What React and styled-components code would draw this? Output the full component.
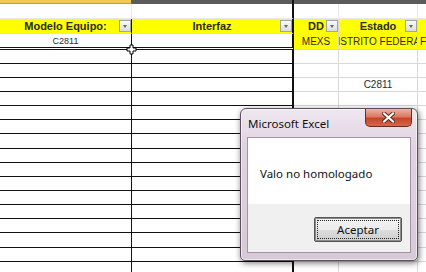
import styled, { createGlobalStyle } from "styled-components";

const GlobalStyle = createGlobalStyle`
  html, body { margin: 0; padding: 0; background: #fff; }
  body { font-family: "Liberation Sans", Arial, sans-serif; overflow: hidden; }
`;

const YELLOW = "#ffff00";
const INK = "1px solid #111";
const GRID = "1px solid #d8d8d8";
const FAINT = "1px solid #e8e8e8";

// column widths include the right edge line
const COLS = [132, 162, 45, 79, 60];
const EDGES = [INK, "2px solid #111", GRID, GRID, "none"];

const Sheet = styled.div`
  position: relative;
  width: 426px;
  height: 272px;
  overflow: hidden;
  background: #fff;
`;

const Row = styled.div`
  display: flex;
  height: ${(p) => p.$h}px;
`;

const Cell = styled.div`
  position: relative;
  box-sizing: border-box;
  flex: none;
  width: ${(p) => p.$w}px;
  height: 100%;
  display: flex;
  align-items: center;
  justify-content: ${(p) => p.$align || "center"};
  padding-left: ${(p) => (p.$align ? "2px" : "0")};
  overflow: hidden;
  white-space: nowrap;
  background: ${(p) => p.$bg || "#fff"};
  border-right: ${(p) => p.$edge};
  border-bottom: ${(p) => p.$under || "none"};
  color: #2a2a2a;
  font-size: ${(p) => p.$size || 10}px;
  font-weight: ${(p) => (p.$bold ? 700 : 400)};
`;

const Label = styled.span`
  flex: none;
`;

const DropBtn = styled.span`
  position: absolute;
  right: 0;
  top: 1px;
  width: 12px;
  height: 12px;
  box-sizing: border-box;
  border: 1px solid #a4a4a4;
  background: linear-gradient(180deg, #fafafa, #dcdcdc);
  display: flex;
  align-items: center;
  justify-content: center;
  &::after {
    content: "";
    border-left: 2.5px solid transparent;
    border-right: 2.5px solid transparent;
    border-top: 3px solid #666;
  }
`;

const Cursor = styled.svg`
  position: absolute;
  left: 126px;
  top: 44px;
`;

const Dialog = styled.div`
  position: absolute;
  left: 240px;
  top: 108px;
  width: 178px;
  height: 153px;
  box-sizing: border-box;
  border: 1px solid #5e4e60;
  border-radius: 6px 6px 5px 5px;
  background: linear-gradient(180deg, #efe7f0 0%, #e0d3e1 25%, #d8c9d9 100%);
  box-shadow: 1px 2px 6px rgba(0, 0, 0, 0.55), inset 0 0 0 1px rgba(255, 255, 255, 0.55);
  display: flex;
  flex-direction: column;
  font-family: "Noto Sans", "Open Sans", sans-serif;
`;

const TitleBar = styled.div`
  position: relative;
  height: 28px;
  display: flex;
  align-items: center;
  padding-left: 7px;
  font-size: 11.5px;
  color: #111;
`;

const CloseBtn = styled.div`
  position: absolute;
  top: 0;
  right: 5px;
  width: 47px;
  height: 18px;
  box-sizing: border-box;
  border: 1px solid #6a2c22;
  border-top: none;
  border-radius: 0 0 5px 5px;
  background: linear-gradient(180deg, #eab3a6 0%, #da7a62 45%, #c6442a 55%, #d8664a 100%);
  display: flex;
  align-items: center;
  justify-content: center;
`;

const Client = styled.div`
  margin: 0 6px 7px;
  border: 1px solid #a393a5;
  display: flex;
  flex-direction: column;
`;

const Message = styled.div`
  height: 66px;
  box-sizing: border-box;
  padding: 4px 0 0 12px;
  background: #fff;
  display: flex;
  align-items: center;
  font-size: 11.5px;
  color: #111;
`;

const Footer = styled.div`
  height: 48px;
  box-sizing: border-box;
  padding: 13px 8px 0 0;
  background: #f0f0f0;
  display: flex;
  justify-content: flex-end;
  align-items: flex-start;
`;

const Button = styled.button`
  position: relative;
  width: 88px;
  height: 25px;
  box-sizing: border-box;
  border: 1px solid #555;
  border-radius: 2px;
  box-shadow: inset 0 0 0 1px #8a8a8a;
  background: linear-gradient(180deg, #f3f3f3 0%, #ebebeb 50%, #dddddd 51%, #cfcfcf 100%);
  font-family: "Noto Sans", "Open Sans", sans-serif;
  font-size: 11.5px;
  color: #111;
  padding: 0;
  &::after {
    content: "";
    position: absolute;
    inset: 2px;
    border: 1px dotted #222;
  }
`;

const dataHeights = [14, 14, 14, 14, 14, 14, 15, 14, 14, 14, 14, 14, 14, 15, 14, 14];

const headers = ["Modelo Equipo:", "Interfaz", "DD", "Estado", ""];

export default function App() {
  return (
    <Sheet>
      <GlobalStyle />

      <Row $h={4}>
        <Cell $w={COLS[0]} $edge="1px solid #5b5b5b" $bg="#f2c852" $under="1px solid #c99b35" />
        <Cell $w={COLS[1]} $edge={EDGES[1]} $bg="#5b5b5b" />
        <Cell $w={COLS[2]} $edge="1px solid #5b5b5b" $bg="#5b5b5b" />
        <Cell $w={COLS[3]} $edge="1px solid #5b5b5b" $bg="#5b5b5b" />
        <Cell $w={COLS[4]} $edge="none" $bg="#5b5b5b" />
      </Row>

      <Row $h={15}>
        {COLS.map((w, i) => (
          <Cell key={i} $w={w} $edge={i === 1 ? EDGES[1] : i === 4 ? "none" : FAINT} $under={FAINT} />
        ))}
      </Row>

      <Row $h={15}>
        {COLS.map((w, i) => (
          <Cell key={i} $w={w} $edge={EDGES[i]} $bg={YELLOW} $under="1px solid #e2e2c8" $bold $size={11}>
            <Label>{headers[i]}</Label>
            {i < 4 && <DropBtn />}
          </Cell>
        ))}
      </Row>

      <Row $h={16}>
        <Cell $w={COLS[0]} $edge={EDGES[0]} $under="3px double #111" $size={9}>
          <Label>C2811</Label>
        </Cell>
        <Cell $w={COLS[1]} $edge={EDGES[1]} $under="3px double #111" />
        <Cell $w={COLS[2]} $edge={EDGES[2]} $bg={YELLOW} $under={GRID}>
          <Label>MEXS</Label>
        </Cell>
        <Cell $w={COLS[3]} $edge={EDGES[3]} $bg={YELLOW} $under={GRID}>
          <Label>DISTRITO FEDERAL</Label>
        </Cell>
        <Cell $w={COLS[4]} $edge="none" $bg={YELLOW} $under={GRID} $align="flex-start">
          <Label>FIJO</Label>
        </Cell>
      </Row>

      {dataHeights.map((h, r) => (
        <Row key={r} $h={h}>
          {COLS.map((w, i) => (
            <Cell key={i} $w={w} $edge={EDGES[i]} $under={i < 2 ? INK : GRID}>
              {r === 2 && i === 3 && <Label>C2811</Label>}
            </Cell>
          ))}
        </Row>
      ))}

      <Cursor width="11" height="11" viewBox="0 0 11 11">
        <path
          d="M4 1h3v3h3v3H7v3H4V7H1V4h3z"
          fill="#fff"
          stroke="#000"
          strokeWidth="1"
        />
      </Cursor>

      <Dialog>
        <TitleBar>
          Microsoft Excel
          <CloseBtn>
            <svg width="13" height="11" viewBox="0 0 13 11">
              <path d="M2 1.5l9 8M11 1.5l-9 8" stroke="#5a2418" strokeWidth="4" strokeLinecap="square" />
              <path d="M2 1.5l9 8M11 1.5l-9 8" stroke="#fff" strokeWidth="2.2" strokeLinecap="square" />
            </svg>
          </CloseBtn>
        </TitleBar>
        <Client>
          <Message>Valo no homologado</Message>
          <Footer>
            <Button>Aceptar</Button>
          </Footer>
        </Client>
      </Dialog>
    </Sheet>
  );
}
